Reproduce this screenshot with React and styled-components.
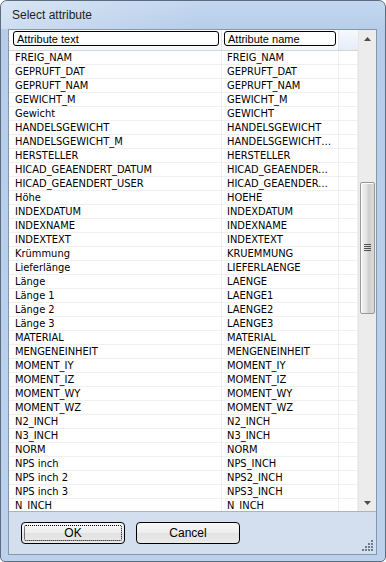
import React from 'react';
import styled, { createGlobalStyle } from 'styled-components';

const GlobalStyle = createGlobalStyle`
  html, body {
    margin: 0;
    padding: 0;
    background: #ffffff;
  }
`;

const rows = [
  ['FREIG_NAM', 'FREIG_NAM'],
  ['GEPRUFT_DAT', 'GEPRUFT_DAT'],
  ['GEPRUFT_NAM', 'GEPRUFT_NAM'],
  ['GEWICHT_M', 'GEWICHT_M'],
  ['Gewicht', 'GEWICHT'],
  ['HANDELSGEWICHT', 'HANDELSGEWICHT'],
  ['HANDELSGEWICHT_M', 'HANDELSGEWICHT_M'],
  ['HERSTELLER', 'HERSTELLER'],
  ['HICAD_GEAENDERT_DATUM', 'HICAD_GEAENDERT_DATUM'],
  ['HICAD_GEAENDERT_USER', 'HICAD_GEAENDERT_USER'],
  ['Höhe', 'HOEHE'],
  ['INDEXDATUM', 'INDEXDATUM'],
  ['INDEXNAME', 'INDEXNAME'],
  ['INDEXTEXT', 'INDEXTEXT'],
  ['Krümmung', 'KRUEMMUNG'],
  ['Lieferlänge', 'LIEFERLAENGE'],
  ['Länge', 'LAENGE'],
  ['Länge 1', 'LAENGE1'],
  ['Länge 2', 'LAENGE2'],
  ['Länge 3', 'LAENGE3'],
  ['MATERIAL', 'MATERIAL'],
  ['MENGENEINHEIT', 'MENGENEINHEIT'],
  ['MOMENT_IY', 'MOMENT_IY'],
  ['MOMENT_IZ', 'MOMENT_IZ'],
  ['MOMENT_WY', 'MOMENT_WY'],
  ['MOMENT_WZ', 'MOMENT_WZ'],
  ['N2_INCH', 'N2_INCH'],
  ['N3_INCH', 'N3_INCH'],
  ['NORM', 'NORM'],
  ['NPS inch', 'NPS_INCH'],
  ['NPS inch 2', 'NPS2_INCH'],
  ['NPS inch 3', 'NPS3_INCH'],
  ['N_INCH', 'N_INCH'],
];

const Window = styled.div`
  box-sizing: border-box;
  width: 386px;
  height: 562px;
  display: flex;
  flex-direction: column;
  border: 1px solid #5b6b80;
  border-radius: 7px 7px 5px 5px;
  background: linear-gradient(to bottom, #c3d7ef 0px, #b6cde9 30px, #bcd2ec 100%);
  overflow: hidden;
`;

const TitleBar = styled.div`
  height: 28px;
  flex-shrink: 0;
  display: flex;
  align-items: center;
  padding-left: 11px;
  font-family: 'Liberation Sans', Arial, sans-serif;
  font-size: 12px;
  color: #1e1e1e;
  background: linear-gradient(100deg, rgba(255,255,255,0.35) 0px, rgba(255,255,255,0.15) 110px, rgba(255,255,255,0) 200px);
`;

const Client = styled.div`
  flex: 1;
  display: flex;
  flex-direction: column;
  margin: 0 8px 6px 7px;
  border: 1px solid #8797ab;
  background: #d3dfee;
`;

const ListBox = styled.div`
  height: 481px;
  display: flex;
  background: #ffffff;
  border-bottom: 1px solid #a9b4c2;
  overflow: hidden;
`;

const Table = styled.div`
  flex: 1;
  display: flex;
  flex-direction: column;
  overflow: hidden;
`;

const columns = '213px 117px 1fr';

const HeaderRow = styled.div`
  display: grid;
  grid-template-columns: ${columns};
  height: 20px;
  flex-shrink: 0;
  border-bottom: 1px solid #d5d5d5;
  background: linear-gradient(to bottom, #ffffff 0%, #ffffff 50%, #f3f6fa 100%);
`;

const HeaderCell = styled.div`
  display: flex;
  align-items: center;
  padding: 1px 2px 4px ${p => p.$left}px;
  border-right: ${p => (p.$last ? 'none' : '1px solid #e3e8ef')};
  background: ${p => (p.$last ? 'linear-gradient(to bottom, #f6f9fd, #e5edf7)' : 'transparent')};
`;

const HeaderBox = styled.div`
  box-sizing: border-box;
  width: 100%;
  height: 15px;
  display: flex;
  align-items: center;
  padding-left: 3px;
  border: 1px solid #000000;
  border-radius: 3px;
  font-family: 'Liberation Sans', Arial, sans-serif;
  font-size: 11px;
  color: #000000;
`;

const Row = styled.div`
  display: grid;
  grid-template-columns: ${columns};
  height: 14px;
  flex-shrink: 0;
  border-bottom: 1px solid #f0f0f0;
  box-sizing: border-box;
`;

const Cell = styled.div`
  padding-left: ${p => p.$pad}px;
  padding-right: 5px;
  border-right: 1px solid #f0f0f0;
  font-family: 'DejaVu Sans Condensed', 'DejaVu Sans', sans-serif;
  font-size: 11px;
  line-height: 13px;
  color: #000000;
  white-space: nowrap;
  overflow: hidden;
  text-overflow: ellipsis;
`;

const ScrollBar = styled.div`
  width: 17px;
  flex-shrink: 0;
  display: flex;
  flex-direction: column;
  background: #ececec;
  border-left: 1px solid #e6e6e6;
`;

const ArrowButton = styled.div`
  height: 17px;
  flex-shrink: 0;
  display: flex;
  align-items: center;
  justify-content: center;
`;

const Track = styled.div`
  flex: 1;
  display: flex;
  flex-direction: column;
  padding: 135px 1px 180px 1px;
`;

const Thumb = styled.div`
  flex: 1;
  display: flex;
  align-items: center;
  justify-content: center;
  border: 1px solid #979797;
  border-radius: 2px;
  background: linear-gradient(to right, #f2f2f2 0%, #e2e2e2 45%, #cfcfcf 55%, #d9d9d9 100%);
  box-shadow: inset 1px 1px 0 #ffffff;
`;

const Footer = styled.div`
  flex: 1;
  display: flex;
  align-items: flex-start;
  gap: 11px;
  padding: 10px 0 0 12px;
  position: relative;
`;

const Button = styled.button`
  box-sizing: border-box;
  width: 104px;
  height: 22px;
  padding: 0;
  border: 1px solid #000000;
  border-radius: 4px;
  background: linear-gradient(to bottom, #f7f7f7 0%, #eeeeee 48%, #e2e2e2 52%, #eaeaea 100%);
  font-family: 'Liberation Sans', Arial, sans-serif;
  font-size: 12px;
  color: #000000;
  display: flex;
  align-items: center;
  justify-content: center;
`;

const Focus = styled.span`
  box-sizing: border-box;
  width: 98px;
  height: 16px;
  display: flex;
  align-items: center;
  justify-content: center;
  border: 1px dotted #000000;
  border-radius: 2px;
`;

const Grip = styled.svg`
  position: absolute;
  right: 2px;
  bottom: 2px;
`;

const UpArrow = () => (
  <svg width="7" height="4" viewBox="0 0 7 4">
    <path d="M3.5 0 L7 4 L0 4 Z" fill="#4d4d4d" />
  </svg>
);

const DownArrow = () => (
  <svg width="7" height="4" viewBox="0 0 7 4">
    <path d="M0 0 L7 0 L3.5 4 Z" fill="#4d4d4d" />
  </svg>
);

const GripLines = () => (
  <svg width="7" height="8" viewBox="0 0 7 8">
    {[0, 2, 4, 6].map(y => (
      <rect key={y} x="0" y={y} width="7" height="1" fill="#505050" />
    ))}
  </svg>
);

const gripDots = [
  [9, 0], [9, 3], [6, 3], [9, 6], [6, 6], [3, 6], [9, 9], [6, 9], [3, 9], [0, 9],
];

export default function App() {
  return (
    <>
      <GlobalStyle />
      <Window>
        <TitleBar>Select attribute</TitleBar>
        <Client>
          <ListBox>
            <Table>
              <HeaderRow>
                <HeaderCell $left={4}>
                  <HeaderBox>Attribute text</HeaderBox>
                </HeaderCell>
                <HeaderCell $left={2}>
                  <HeaderBox>Attribute name</HeaderBox>
                </HeaderCell>
                <HeaderCell $last />
              </HeaderRow>
              {rows.map(([text, name]) => (
                <Row key={text}>
                  <Cell $pad={6}>{text}</Cell>
                  <Cell $pad={5}>{name}</Cell>
                  <Cell />
                </Row>
              ))}
            </Table>
            <ScrollBar>
              <ArrowButton>
                <UpArrow />
              </ArrowButton>
              <Track>
                <Thumb>
                  <GripLines />
                </Thumb>
              </Track>
              <ArrowButton>
                <DownArrow />
              </ArrowButton>
            </ScrollBar>
          </ListBox>
          <Footer>
            <Button>
              <Focus>OK</Focus>
            </Button>
            <Button>Cancel</Button>
            <Grip width="12" height="12" viewBox="0 0 12 12">
              {gripDots.map(([x, y]) => (
                <rect key={`${x}-${y}`} x={x} y={y} width="2" height="2" fill="#6b7a8c" />
              ))}
            </Grip>
          </Footer>
        </Client>
      </Window>
    </>
  );
}
